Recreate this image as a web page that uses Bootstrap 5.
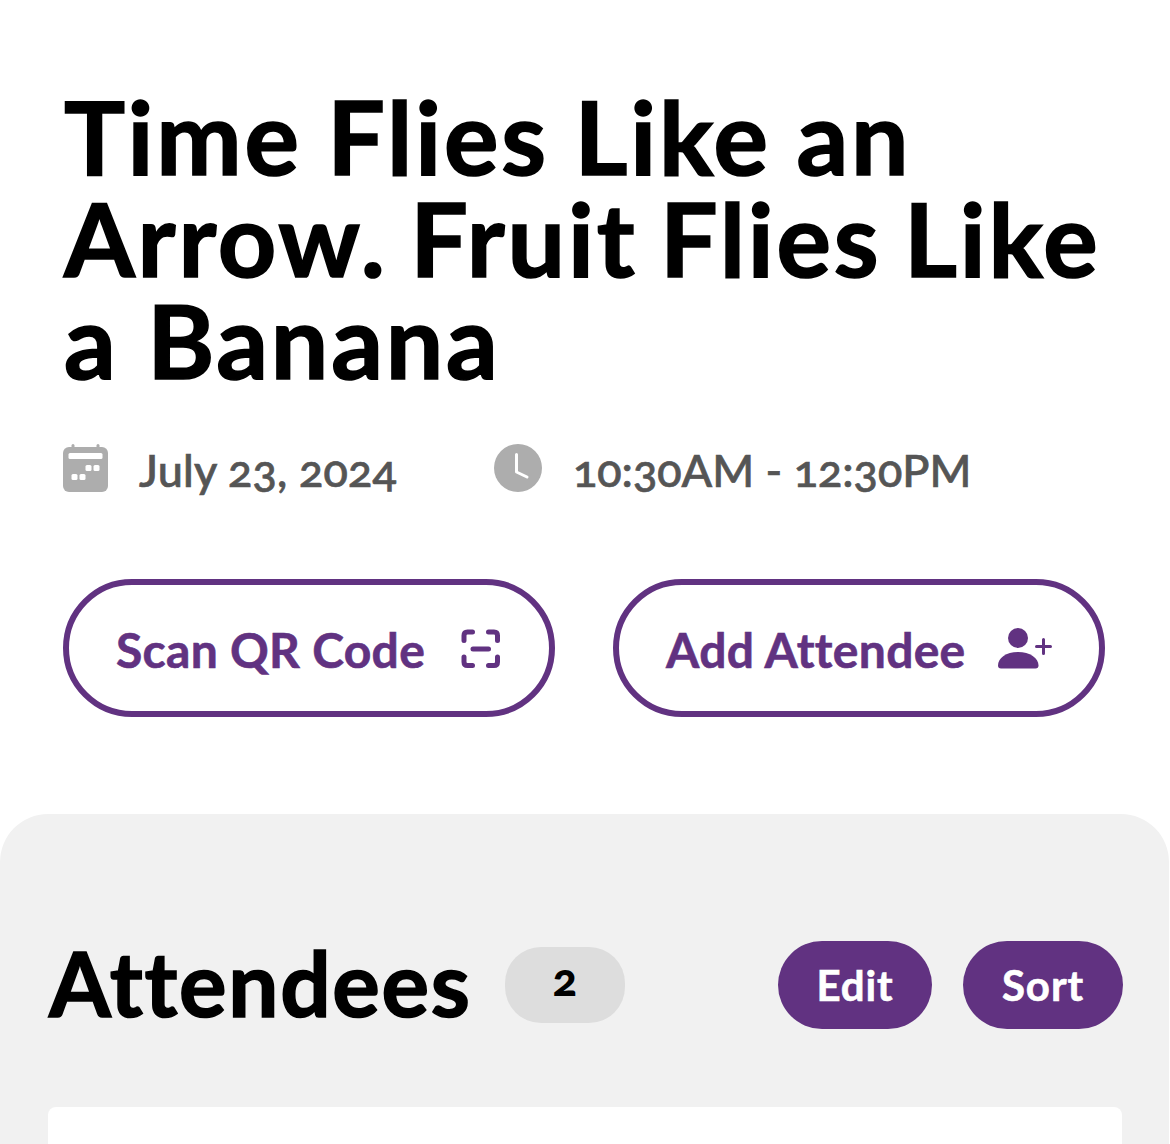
<!DOCTYPE html>
<html lang="en">
<head>
    <meta charset="UTF-8">
    <meta name="viewport" content="width=device-width, initial-scale=1.0">
    <title>Event Check-in</title>
    <link href="https://cdn.jsdelivr.net/npm/bootstrap@5.3.0/dist/css/bootstrap.min.css" rel="stylesheet">
    <style>
        body {
            height: 1144px;
            overflow: hidden;
            font-family: Lato, "Open Sans", sans-serif;
            font-variant-ligatures: none;
            color: #000;
            background: #fff;
        }
        .event-header {
            height: 814px;
            padding: 85px 64px 0;
        }
        .event-title {
            font-size: 102px;
            line-height: 102px;
            font-weight: 700;
            letter-spacing: 2.8px;
            white-space: nowrap;
            -webkit-text-stroke: 1.6px #000;
        }
        .line-one {
            word-spacing: -2px;
        }
        .line-two {
            word-spacing: -5px;
        }
        .line-three {
            word-spacing: 1px;
        }
        .event-meta {
            height: 60px;
            margin-top: 47px;
            font-size: 45px;
            line-height: 60px;
            color: #555;
            font-weight: 500;
            font-variant-numeric: oldstyle-nums;
            white-space: nowrap;
            -webkit-text-stroke: .7px #555;
        }
        .event-meta span {
            padding-top: 3px;
        }
        .meta-date {
            width: 430px;
        }
        .meta-date svg {
            margin-right: 31px;
            margin-left: -1px;
        }
        .date-text {
            letter-spacing: .2px;
        }
        .meta-time svg {
            margin-right: 31px;
        }
        .event-actions {
            gap: 58px;
            margin: 81px 0 0 -1px;
        }
        .btn-action {
            width: 492px;
            height: 138px;
            border: 6px solid #613281;
            color: #613281;
            font-size: 48px;
            font-weight: 700;
            line-height: 1;
            padding: 2px 47px 0;
            white-space: nowrap;
            -webkit-text-stroke: .6px #613281;
        }
        .btn-action span {
            letter-spacing: .3px;
            padding-top: 2px;
        }
        .attendee-panel {
            width: 1169px;
            height: 330px;
            padding: 127px 46px 0 48px;
            background: #f1f1f1;
            border-radius: 48px 48px 0 0;
        }
        .panel-bar {
            height: 88px;
        }
        .panel-title {
            width: 457px;
            padding: 0 0 4px 1px;
            font-size: 89px;
            font-weight: 700;
            line-height: 88px;
            letter-spacing: 1.7px;
            white-space: nowrap;
            -webkit-text-stroke: 1.6px #000;
        }
        .count-pill {
            width: 120px;
            height: 76px;
            padding-bottom: 13px;
            border-radius: 36px;
            background: #ddd;
            font-size: 46px;
            line-height: 1;
            font-weight: 900;
            font-variant-numeric: oldstyle-nums;
        }
        .btn-solid {
            height: 88px;
            background: #613281;
            color: #fff;
            border: 0;
            font-size: 42px;
            font-weight: 700;
            letter-spacing: .9px;
            padding: 0;
            -webkit-text-stroke: .6px #fff;
        }
        .btn-edit {
            width: 154px;
            margin-right: 31px;
        }
        .btn-sort {
            width: 160px;
        }
        .attendee-list {
            width: 1074px;
            height: 60px;
            margin-top: 78px;
            border-radius: 8px;
        }
    </style>
</head>
<body>
    <header class="event-header">
        <h1 class="event-title mb-0"><span class="line-one">Time Flies Like an</span><br><span class="line-two">Arrow. Fruit Flies Like</span><br><span class="line-three">a Banana</span></h1>
        <div class="event-meta d-flex">
            <div class="meta-date d-flex align-items-center">
                <svg width="45" height="50" viewBox="0 0 45 50">
                    <g fill="#adadad">
                        <rect y="4" width="45" height="45" rx="6"/>
                        <rect x="8.5" y="1" width="3" height="6" rx="1.5"/>
                        <rect x="33.5" y="1" width="3" height="6" rx="1.5"/>
                    </g>
                    <g fill="#fff">
                        <rect x="5.5" y="10" width="34" height="6" rx="1.5"/>
                        <rect x="22.5" y="22" width="6" height="6" rx="1.5"/>
                        <rect x="30.5" y="22" width="6" height="6" rx="1.5"/>
                        <rect x="8.5" y="31" width="6" height="6" rx="1.5"/>
                        <rect x="16.5" y="31" width="6" height="6" rx="1.5"/>
                    </g>
                </svg>
                <span class="date-text">July 23, 2024</span>
            </div>
            <div class="meta-time d-flex align-items-center">
                <svg width="48" height="48" viewBox="0 0 48 48">
                    <circle cx="24" cy="24" r="24" fill="#adadad"/>
                    <path d="M22.500 10.500V28L33 33" fill="none" stroke="#fff" stroke-width="3" stroke-linecap="round" stroke-linejoin="round"/>
                </svg>
                <span>10:30AM - 12:30PM</span>
            </div>
        </div>
        <div class="event-actions d-flex">
            <button type="button" class="btn btn-action rounded-pill d-flex align-items-center justify-content-between">
                <span>Scan QR Code</span>
                <svg width="42" height="42" viewBox="0 0 42 42" fill="none" stroke="#613281" stroke-width="5" stroke-linecap="round">
                    <path d="M4 12.500V7.500Q4 4 7.500 4H12.500M28.500 4H34Q37.500 4 37.500 7.500V12.500M37.500 29V34Q37.500 37.500 34 37.500H28.500M12.500 37.500H7.500Q4 37.500 4 34V29M13 21H28.500"/>
                </svg>
            </button>
            <button type="button" class="btn btn-action rounded-pill d-flex align-items-center justify-content-between">
                <span>Add Attendee</span>
                <svg width="54" height="42" viewBox="0 0 54 42">
                    <g fill="#613281">
                        <circle cx="20" cy="10" r="10"/>
                        <path d="M3 40.500Q0 40.500 0 37.500C0 30 8 24 20 24S40.500 30 40.500 37.500Q40.500 40.500 37.500 40.500Z"/>
                    </g>
                    <path d="M38.500 18.500H52.500M45.500 11.500V25.500" stroke="#613281" stroke-width="3" stroke-linecap="round"/>
                </svg>
            </button>
        </div>
    </header>

    <section class="attendee-panel">
        <div class="panel-bar d-flex align-items-center">
            <h2 class="panel-title mb-0">Attendees</h2>
            <span class="count-pill d-flex align-items-center justify-content-center">2</span>
            <button type="button" class="btn btn-solid btn-edit rounded-pill ms-auto">Edit</button>
            <button type="button" class="btn btn-solid btn-sort rounded-pill">Sort</button>
        </div>
        <div class="attendee-list bg-white"></div>
    </section>

    <script src="https://cdn.jsdelivr.net/npm/bootstrap@5.3.0/dist/js/bootstrap.bundle.min.js"></script>
</body>
</html>
